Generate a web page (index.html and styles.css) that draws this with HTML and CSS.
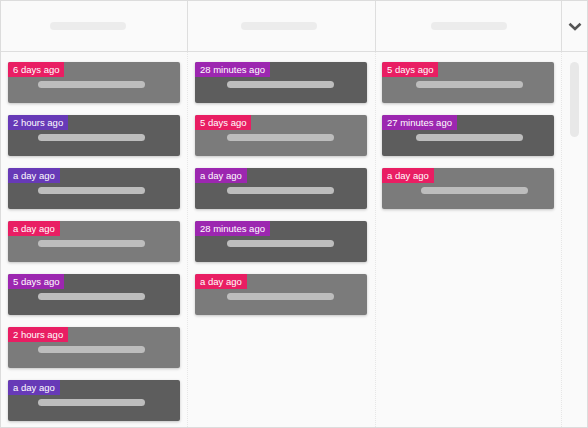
FILE: index.html
```html
<!DOCTYPE html>
<html>
<head>
<meta charset="utf-8">
<link rel="stylesheet" href="styles.css">
</head>
<body>
<div class="board">
  <div class="head">
    <div class="hcol c1"><span class="hpill"></span></div>
    <div class="hcol c2"><span class="hpill"></span></div>
    <div class="hcol c3"><span class="hpill"></span></div>
    <div class="hcol gutter">
      <svg class="chev" width="14" height="9" viewBox="0 0 14 9"><path d="M1.5 1.8 L7 7 L12.5 1.8" fill="none" stroke="#555" stroke-width="2.6"/></svg>
    </div>
  </div>
  <div class="body">
    <div class="col c1">
      <div class="card light"><span class="tag pink">6 days ago</span><span class="bar"></span></div>
      <div class="card dark"><span class="tag deep">2 hours ago</span><span class="bar"></span></div>
      <div class="card dark"><span class="tag deep">a day ago</span><span class="bar"></span></div>
      <div class="card light"><span class="tag pink">a day ago</span><span class="bar"></span></div>
      <div class="card dark"><span class="tag purple">5 days ago</span><span class="bar"></span></div>
      <div class="card light"><span class="tag pink">2 hours ago</span><span class="bar"></span></div>
      <div class="card dark"><span class="tag deep">a day ago</span><span class="bar"></span></div>
    </div>
    <div class="col c2">
      <div class="card dark"><span class="tag purple">28 minutes ago</span><span class="bar"></span></div>
      <div class="card light"><span class="tag pink">5 days ago</span><span class="bar"></span></div>
      <div class="card dark"><span class="tag purple">a day ago</span><span class="bar"></span></div>
      <div class="card dark"><span class="tag purple">28 minutes ago</span><span class="bar"></span></div>
      <div class="card light"><span class="tag pink">a day ago</span><span class="bar"></span></div>
    </div>
    <div class="col c3">
      <div class="card light"><span class="tag pink">5 days ago</span><span class="bar"></span></div>
      <div class="card dark"><span class="tag purple">27 minutes ago</span><span class="bar"></span></div>
      <div class="card light"><span class="tag pink">a day ago</span><span class="bar shift"></span></div>
    </div>
    <div class="col gutter">
      <div class="thumb"></div>
    </div>
  </div>
</div>
</body>
</html>
```
FILE: styles.css
```css
* { box-sizing: border-box; }
html, body { margin: 0; padding: 0; }
body {
  width: 588px;
  height: 428px;
  overflow: hidden;
  font-family: "Liberation Sans", Arial, sans-serif;
  background: #fafafa;
}
.board {
  width: 588px;
  height: 428px;
  border: 1px solid #dcdcdc;
  background: #fafafa;
  display: flex;
  flex-direction: column;
}
.head {
  height: 51px;
  flex: none;
  display: grid;
  grid-template-columns: 187px 188px 186px 1fr;
  border-bottom: 1px solid #dedede;
}
.hcol {
  border-right: 1px solid #dedede;
  display: flex;
  align-items: center;
  justify-content: center;
}
.hcol.gutter { border-right: none; }
.hpill {
  display: block;
  width: 76px;
  height: 8px;
  border-radius: 4px;
  background: #ececec;
}
.c1 .hpill { margin-right: 12px; }
.c2 .hpill { margin-right: 6px; }
.chev { display: block; margin-top: 1px; margin-left: 1px; }
.body {
  flex: 1;
  min-height: 0;
  overflow: hidden;
  display: grid;
  grid-template-columns: 187px 188px 186px 1fr;
}
.col {
  border-right: 1px dotted #e6e6e6;
  padding-top: 10px;
  padding-left: 7px;
  display: flex;
  flex-direction: column;
  align-items: flex-start;
  gap: 12px;
}
.col.c3 { padding-left: 6px; }
.col.gutter { border-right: none; padding-left: 8px; }
.card {
  flex: none;
  width: 172px;
  height: 41px;
  border-radius: 2px;
  box-shadow: 0 1px 3px rgba(0,0,0,0.22);
  display: flex;
  flex-direction: column;
  align-items: flex-start;
}
.card.light { background: #7b7b7b; }
.card.dark { background: #5d5d5d; }
.tag {
  display: block;
  height: 15px;
  line-height: 15px;
  padding: 0 5px;
  color: #fff;
  font-size: 9.5px;
  border-top-left-radius: 2px;
}
.tag.pink { background: #e91e63; }
.tag.purple { background: #9c27b0; }
.tag.deep { background: #673ab7; }
.bar {
  display: block;
  width: 107px;
  height: 7px;
  border-radius: 4px;
  background: #bdbdbd;
  margin-top: 4px;
  margin-left: 32px;
}
.c1 .bar { margin-left: 30px; }
.c3 .bar { margin-left: 34px; }
.c3 .bar.shift { margin-left: 39px; }
.thumb {
  width: 9px;
  height: 75px;
  border-radius: 5px;
  background: #e8e8e8;
}
```
